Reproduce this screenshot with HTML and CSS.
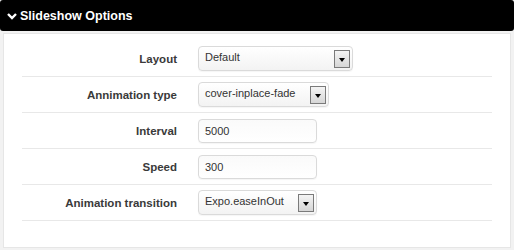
FILE: index.html
```html
<!doctype html>
<html>
  <head>
    <title>Slideshow Options</title>
    <link rel="stylesheet" href="styles.css">
  </head>
  <body>
    <div class="boite">
      <div class="entete">
        <svg class="chevron" width="12" height="10" viewBox="0 0 12 10">
          <polyline points="2,3 6,7 10,3" fill="none" stroke="#fff" stroke-width="2.4"/>
        </svg>
        Slideshow Options
      </div>
      <div class="contenu">
        <div class="ligne">
          <label class="libelle">Layout</label>
          <div class="liste large"><span>Default</span><span class="fleche"></span></div>
        </div>
        <div class="ligne">
          <label class="libelle">Annimation type</label>
          <div class="liste moyen"><span>cover-inplace-fade</span><span class="fleche"></span></div>
        </div>
        <div class="ligne">
          <label class="libelle">Interval</label>
          <div class="champ">5000</div>
        </div>
        <div class="ligne">
          <label class="libelle">Speed</label>
          <div class="champ">300</div>
        </div>
        <div class="ligne">
          <label class="libelle">Animation transition</label>
          <div class="liste petit"><span>Expo.easeInOut</span><span class="fleche"></span></div>
        </div>
      </div>
    </div>
  </body>
</html>
```
FILE: styles.css
```css
body {
  margin: 0;
  background-color: #f2f2f2;
  font-family: "Liberation Sans", Arial, sans-serif;
}

.boite {
  width: 514px;
  height: 250px;
}

.entete {
  height: 31px;
  background-color: #000;
  border-radius: 3px;
  color: #fff;
  font-weight: bold;
  font-size: 12.5px;
  display: flex;
  align-items: center;
  padding-left: 6px;
  gap: 2px;
}

.chevron {
  display: block;
}

.contenu {
  margin: 2px 3px 0;
  height: 206px;
  background-color: #fff;
  border: 1px solid #e6e6e6;
  padding: 7px 18px 0;
}

.ligne {
  height: 35px;
  border-bottom: 1px solid #e8e8e8;
  display: flex;
  align-items: center;
  gap: 21px;
}

.libelle {
  width: 155px;
  text-align: right;
  font-size: 11.5px;
  font-weight: bold;
  color: #3a3a3a;
}

.liste, .champ {
  box-sizing: border-box;
  height: 25px;
  border: 1px solid #dadada;
  border-radius: 4px;
  background: linear-gradient(#fff, #f3f3f3);
  box-shadow: 0 1px 1px rgba(0, 0, 0, 0.04);
  font-size: 11px;
  color: #333;
  display: flex;
  align-items: center;
  justify-content: space-between;
  padding: 0 2px 3px 6px;
}

.large {
  width: 155px;
}

.moyen {
  width: 131px;
}

.petit {
  width: 119px;
}

.champ {
  width: 119px;
  height: 24px;
  background: linear-gradient(#fafafa, #fff);
  padding-bottom: 0;
}

.fleche {
  box-sizing: border-box;
  width: 16px;
  height: 18px;
  margin-top: 3px;
  border: 1px solid #7a7a7a;
  background: linear-gradient(#f4f4f4, #d6d6d6);
  position: relative;
}

.fleche::after {
  content: "";
  position: absolute;
  left: 4px;
  top: 7px;
  border-left: 3px solid transparent;
  border-right: 3px solid transparent;
  border-top: 4px solid #000;
}
```
